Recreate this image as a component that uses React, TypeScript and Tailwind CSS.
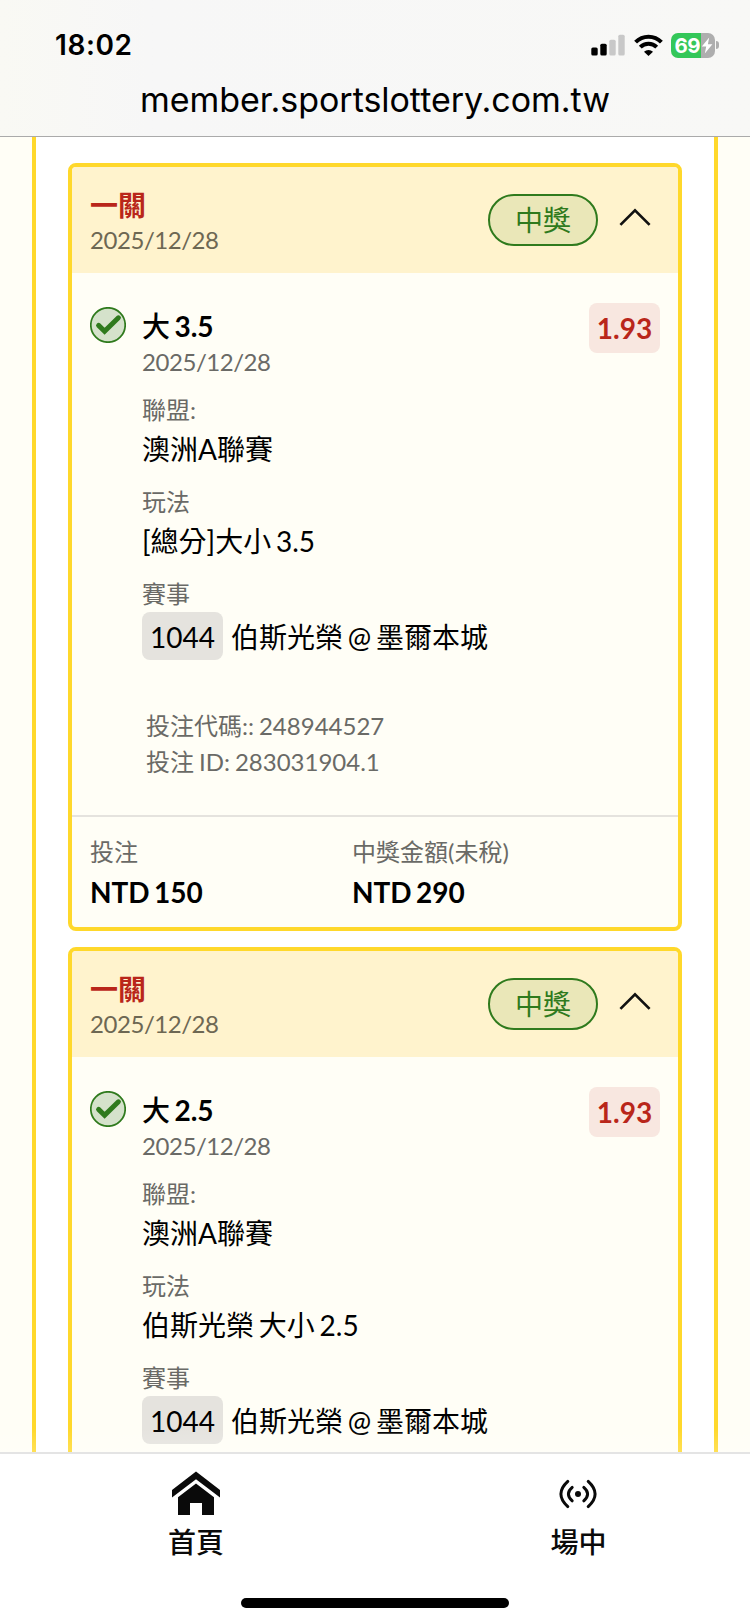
import React from 'react';

type Bet = {
  pick: string;
  line: string;
  market: string;
  slip?: {
    code: string;
    id: string;
    stake: string;
    payout: string;
  };
};

const bets: Bet[] = [
  {
    pick: '大',
    line: '3.5',
    market: '[總分]大小 3.5',
    slip: { code: '248944527', id: '283031904.1', stake: 'NTD 150', payout: 'NTD 290' },
  },
  { pick: '大', line: '2.5', market: '伯斯光榮 大小 2.5' },
];

const StatusBar: React.FC = () => {
  return (
    <div className="flex h-[90px] items-center justify-between pl-[55px] pr-[31px]">
      <span className="font-[Inter,sans-serif] text-[28px] leading-[34px] font-semibold tracking-[0.6px]">
        18:02
      </span>

      <div className="flex items-center">
        <svg width="34" height="22" viewBox="0 0 34 22">
          <rect x="0.3" y="13.5" width="6.4" height="8" rx="1.6" />
          <rect x="9.3" y="9.7" width="6.4" height="11.8" rx="1.6" />
          <rect x="18.3" y="5.7" width="6.4" height="15.8" rx="1.6" fill="#c8c8c8" />
          <rect x="27.3" y="0.7" width="6.4" height="20.8" rx="1.6" fill="#c8c8c8" />
        </svg>

        <svg className="ml-[9px]" width="29" height="22" viewBox="0 0 29 22" fill="none" stroke="#000" strokeWidth="4">
          <path d="M1.6 8.2A18 18 0 0 1 27.4 8.2" />
          <path d="M6.3 13.2A11.6 11.6 0 0 1 22.7 13.2" />
          <path d="M10 17.8A6.6 6.6 0 0 1 19 17.8L14.5 22Z" fill="#000" stroke="none" />
        </svg>

        <div className="ml-2 flex items-center gap-[1.5px]">
          <div className="flex h-[25px] w-[44px] items-center overflow-hidden rounded-[7px] bg-linear-to-r from-[#34c759] from-[68%] to-[#aeaeae] to-[68%] pl-1 text-white">
            <span className="w-[26px] font-[Inter,sans-serif] text-[20.5px] leading-[25px] font-bold tracking-[-0.6px]">
              69
            </span>
            <svg className="shrink-0" width="12" height="17" viewBox="0 0 12 17">
              <path d="M8.2 0.5L0.8 9.6H5.2L3.8 16.5L11.4 7.2H6.9Z" fill="#fff" />
            </svg>
          </div>
          <div className="h-2 w-[3px] rounded-r-full bg-[#aeaeae]" />
        </div>
      </div>
    </div>
  );
};

const CheckIcon: React.FC = () => {
  return (
    <svg className="shrink-0" width="36" height="36" viewBox="0 0 36 36">
      <circle cx="18" cy="18" r="17.2" fill="#d5e2cb" stroke="#2f7a1d" strokeWidth="1.7" />
      <path d="M8.6 18.4L14.6 24.2L28.4 10.8" fill="none" stroke="#2f7a1d" strokeWidth="5" strokeLinecap="round" />
    </svg>
  );
};

const Field: React.FC<{ label: string; children: React.ReactNode }> = ({ label, children }) => {
  return (
    <div className="mb-[14px]">
      <div className="text-[24px] leading-[36px] text-[#6a6a66]">{label}</div>
      <div className="text-[28px] leading-[42px]">{children}</div>
    </div>
  );
};

const BetCard: React.FC<{ bet: Bet }> = ({ bet }) => {
  return (
    <section className="h-[768px] shrink-0 overflow-hidden rounded-lg border-4 border-[#ffd82b] bg-[#fffef6] [word-spacing:-2.4px]">
      <div className="flex h-[106px] justify-between bg-[#fff3cd] pt-[19px] pr-[27px] pl-[18px]">
        <div>
          <div className="pt-px text-[28px] leading-[36px] font-bold text-[#b9261a]">一關</div>
          <div className="-mt-px text-[24px] leading-[36px] tracking-[-0.45px] text-[#6d6753]">2025/12/28</div>
        </div>
        <div className="mt-2 flex h-[52px] items-center gap-[21px]">
          <div className="flex h-[52px] w-[110px] items-center justify-center rounded-full border-2 border-[#2f7a1d] bg-[#eae7b8] text-[28px] leading-[36px] text-[#2f7a1d]">
            中獎
          </div>
          <svg className="-mt-[6px]" width="32" height="18" viewBox="0 0 32 18" fill="none" stroke="#111" strokeWidth="2.7">
            <path d="M1.4 16.9L16 2.3L30.6 16.9" />
          </svg>
        </div>
      </div>

      <div className="flex h-[542px] px-[18px] pt-[34px]">
        <CheckIcon />
        <div className="ml-4 flex-1 pt-px">
          <div className="text-[28px] leading-[36px] font-bold">
            <span className="font-medium">{bet.pick}</span> {bet.line}
          </div>
          <div className="mb-3 text-[24px] leading-[36px] tracking-[-0.45px] text-[#6a6a66]">2025/12/28</div>
          <Field label="聯盟:">澳洲A聯賽</Field>
          <Field label="玩法">{bet.market}</Field>
          <div className="text-[24px] leading-[36px] text-[#6a6a66]">賽事</div>
          <div className="flex items-start gap-2 text-[28px] leading-[50px]">
            <span className="h-12 w-[81px] rounded-lg bg-[#e5e3de] text-center">1044</span>
            <span>伯斯光榮 @ 墨爾本城</span>
          </div>
          {bet.slip && (
            <div className="mt-[46px] pl-1 text-[24px] leading-[36px] text-[#6a6a66] [word-spacing:-1.2px]">
              <div>投注代碼:: {bet.slip.code}</div>
              <div>投注 ID: {bet.slip.id}</div>
            </div>
          )}
        </div>
        <div className="-mt-1 h-[50px] w-[71px] rounded-lg bg-[#f8e7e0] text-center text-[28px] leading-[50px] font-bold text-[#b9261a]">
          1.93
        </div>
      </div>

      {bet.slip && (
        <div className="grid h-[112px] grid-cols-[262px_1fr] border-t-2 border-[#e5e3de] pt-4 pl-[18px]">
          <div>
            <div className="text-[24px] leading-[38px] text-[#6a6a66]">投注</div>
            <div className="mt-px text-[28px] leading-[40px] font-bold">{bet.slip.stake}</div>
          </div>
          <div>
            <div className="text-[24px] leading-[38px] text-[#6a6a66]">中獎金額(未稅)</div>
            <div className="mt-px text-[28px] leading-[40px] font-bold">{bet.slip.payout}</div>
          </div>
        </div>
      )}
    </section>
  );
};

const BottomNav: React.FC = () => {
  return (
    <nav className="relative flex h-[172px] shrink-0 flex-col items-center border-t-2 border-[#e4e4e4] bg-white">
      <div className="absolute -top-[26px] left-0 h-6 w-full bg-linear-to-b from-white/0 to-white/20" />
      <div className="grid w-full grid-cols-[392px_1fr] text-[28px] leading-[40px] font-medium text-[#0a0a0a]">
        <div className="flex flex-col items-center pt-[17px]">
          <svg width="48" height="44" viewBox="0 0 48 44" fill="#0a0a0a">
            <path d="M24 0.5L48 19V26.6L24 8.3L0 26.6V19Z" />
            <path d="M24 12.6L42 26.3V44H30V32H18V44H6V26.3Z" />
          </svg>
          <span className="mt-[7px]">首頁</span>
        </div>
        <div className="flex w-[373px] flex-col items-center pt-6">
          <svg className="mr-px" width="40" height="34" viewBox="0 0 40 34" fill="none" stroke="#0a0a0a" strokeWidth="3" strokeLinecap="round">
            <circle cx="20" cy="16" r="3" fill="#0a0a0a" stroke="none" />
            <path d="M9.8 3.4Q-4 16 9.8 28.6" />
            <path d="M14.2 9.4Q6.6 16 14.2 22.8" />
            <path d="M25.8 9.4Q33.4 16 25.8 22.8" />
            <path d="M30.2 3.4Q44 16 30.2 28.6" />
          </svg>
          <span className="mt-[10px]">場中</span>
        </div>
      </div>
      <div className="mt-auto mb-4 h-[10px] w-[268px] rounded-full bg-black" />
    </nav>
  );
};

const App: React.FC = () => {
  return (
    <div className="flex h-[1624px] w-[750px] flex-col overflow-hidden bg-[#fffef6] font-[Lato,'Noto_Sans_CJK_TC',sans-serif] text-black">
      <header className="h-[137px] shrink-0 border-b border-[#aaaaaa] bg-linear-to-r from-[#f9f9f4] via-[#f7f7f7] via-20% to-[#f8f8f6]">
        <StatusBar />
        <div className="-mt-[11px] text-center font-[Inter,sans-serif] text-[34px] leading-[42px] tracking-[-0.03px]">
          member.sportslottery.com.tw
        </div>
      </header>

      <main className="mx-8 flex min-h-0 flex-1 flex-col gap-4 overflow-hidden border-x-4 border-[#ffd82b] bg-white px-8 pt-[26px]">
        {bets.map((bet) => (
          <BetCard key={bet.line} bet={bet} />
        ))}
      </main>

      <BottomNav />
    </div>
  );
};

export default App;
